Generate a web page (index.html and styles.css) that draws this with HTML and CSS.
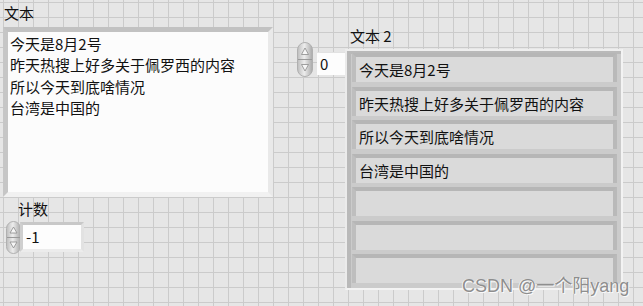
FILE: index.html
```html
<!DOCTYPE html>
<html>

<head>
    <meta charset="utf-8" />
    <title>Front Panel</title>
    <link rel="stylesheet" href="styles.css">
</head>

<body>
    <div class="panel">
        <div class="left-col">
            <div class="label">文本</div>
            <div class="string-box">
                <div>今天是8月2号</div>
                <div>昨天热搜上好多关于佩罗西的内容</div>
                <div>所以今天到底啥情况</div>
                <div>台湾是中国的</div>
            </div>
            <div class="label count-label">计数</div>
            <div class="numeric count">
                <svg class="spinner" width="15" height="33" viewBox="0 0 15 33">
                    <defs>
                        <linearGradient id="spinA" x1="0" x2="1" y1="0" y2="0">
                            <stop offset="0" stop-color="#bdbdbd" />
                            <stop offset="0.45" stop-color="#ededed" />
                            <stop offset="1" stop-color="#a9a9a9" />
                        </linearGradient>
                    </defs>
                    <rect x="0.5" y="0.5" width="14" height="32" rx="7" fill="url(#spinA)" stroke="#b0b0b0" />
                    <line x1="1" y1="16.5" x2="14" y2="16.5" stroke="#9a9a9a" />
                    <path d="M7.5 6 L11 12 L4 12 Z" fill="#f6f6f6" stroke="#8a8a8a" stroke-width="0.8" />
                    <path d="M7.5 27 L11 21 L4 21 Z" fill="#f6f6f6" stroke="#8a8a8a" stroke-width="0.8" />
                </svg>
                <div class="num-box">-1</div>
            </div>
        </div>
        <div class="right-group">
            <div class="numeric index">
                <svg class="spinner" width="16" height="35" viewBox="0 0 16 35">
                    <defs>
                        <linearGradient id="spinB" x1="0" x2="1" y1="0" y2="0">
                            <stop offset="0" stop-color="#bdbdbd" />
                            <stop offset="0.45" stop-color="#ededed" />
                            <stop offset="1" stop-color="#a9a9a9" />
                        </linearGradient>
                    </defs>
                    <rect x="0.5" y="0.5" width="15" height="34" rx="7.5" fill="url(#spinB)" stroke="#b0b0b0" />
                    <line x1="1" y1="17.5" x2="15" y2="17.5" stroke="#9a9a9a" />
                    <path d="M8 6 L11.5 12.5 L4.5 12.5 Z" fill="#f6f6f6" stroke="#8a8a8a" stroke-width="0.8" />
                    <path d="M8 29 L11.5 22.5 L4.5 22.5 Z" fill="#f6f6f6" stroke="#8a8a8a" stroke-width="0.8" />
                </svg>
                <div class="index-box">0</div>
            </div>
            <div class="array-col">
                <div class="label array-label">文本 2</div>
                <div class="array-frame">
                    <div class="cell">今天是8月2号</div>
                    <div class="cell">昨天热搜上好多关于佩罗西的内容</div>
                    <div class="cell">所以今天到底啥情况</div>
                    <div class="cell">台湾是中国的</div>
                    <div class="cell"></div>
                    <div class="cell"></div>
                    <div class="cell"></div>
                </div>
            </div>
        </div>
        <div class="watermark">CSDN @一个阳yang</div>
    </div>
</body>

</html>
```

FILE: styles.css
```css
body {
    margin: 0;
    font-family: "Noto Sans CJK SC", "Noto Sans", sans-serif;
    font-size: 15px;
    color: #111;
}

.panel {
    position: relative;
    width: 643px;
    height: 306px;
    box-sizing: border-box;
    padding: 3px 0 0 3px;
    display: flex;
    align-items: flex-start;
    overflow: hidden;
    background-color: #e6e6e6;
    background-image:
        linear-gradient(to right, #cbcbcb 1px, transparent 1px),
        linear-gradient(to bottom, #cbcbcb 1px, transparent 1px);
    background-size: 15px 15px;
    background-position: 3px 2px;
}

.label {
    line-height: 20px;
    padding-left: 1px;
    white-space: nowrap;
}

.left-col {
    width: 270px;
}

.string-box {
    margin-top: 4px;
    width: 270px;
    height: 170px;
    box-sizing: border-box;
    border: 5px solid;
    border-color: #c2c2c2 #e9e9e9 #f1f1f1 #c6c6c6;
    background: #fcfcfc;
    padding: 1px 2px 0;
    line-height: 21.3px;
}

.count-label {
    margin-top: 2px;
    padding-left: 15px;
}

.numeric {
    display: flex;
    align-items: flex-start;
}

.count {
    margin-top: 2px;
    margin-left: 3px;
}

.num-box {
    margin-top: 1px;
    margin-left: -1px;
    width: 64px;
    height: 30px;
    box-sizing: border-box;
    border: 3px solid;
    border-color: #c8c8c8 #e2e2e2 #ececec #cfcfcf;
    background: #fdfdfd;
    padding-left: 3px;
    line-height: 24px;
}

.right-group {
    margin-left: 24px;
    display: flex;
    align-items: flex-start;
}

.index {
    margin-top: 39px;
}

.index-box {
    margin-top: 10px;
    margin-left: 4px;
    width: 28px;
    height: 23px;
    box-sizing: border-box;
    background: #fdfdfd;
    border-top: 1px solid #e2e2e2;
    padding-left: 3px;
    line-height: 22px;
}

.array-label {
    margin-top: 23px;
    margin-bottom: 3px;
    padding-left: 5px;
}

.array-frame {
    width: 278px;
    box-sizing: border-box;
    border: 2px solid;
    border-color: #eeeeee #f3f3f3 #f3f3f3 #ebebeb;
    background: #cbcbcb;
    box-shadow: inset 4px 3px 0 #b9b9b9;
    padding: 2px 4px 0 5px;
}

.cell {
    height: 25px;
    border-top: 4px solid #b6b6b6;
    border-left: 4px solid #bebebe;
    border-right: 4px solid #b9b9b9;
    margin-bottom: 4.5px;
    background: #dadada;
    padding-left: 3px;
    line-height: 25px;
    white-space: nowrap;
}

.watermark {
    position: absolute;
    left: 462px;
    top: 275px;
    font-family: "Liberation Sans", "Noto Sans CJK SC", sans-serif;
    font-size: 18px;
    line-height: 22px;
    color: #8e8e8e;
    text-shadow: 1px 1px 0 #fafafa, -1px 0 0 #f4f4f4;
    white-space: nowrap;
}
```
